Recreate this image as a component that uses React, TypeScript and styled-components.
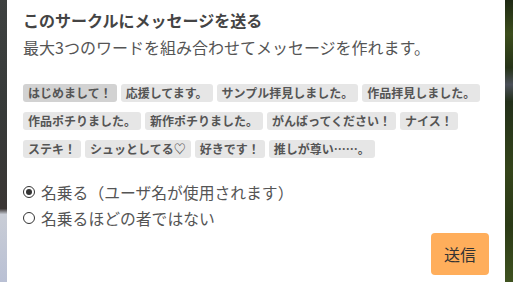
import { useState } from 'react';
import styled, { createGlobalStyle } from 'styled-components';

const GlobalStyle = createGlobalStyle`
  html, body {
    margin: 0;
    padding: 0;
    background: #222;
  }
  * {
    box-sizing: border-box;
  }
`;

const WORDS = [
  'はじめまして！',
  '応援してます。',
  'サンプル拝見しました。',
  '作品拝見しました。',
  '作品ポチりました。',
  '新作ポチりました。',
  'がんばってください！',
  'ナイス！',
  'ステキ！',
  'シュッとしてる♡',
  '好きです！',
  '推しが尊い……。',
];

const Stage = styled.div`
  display: flex;
  width: 513px;
  height: 282px;
  overflow: hidden;
  font-family: 'Noto Sans CJK JP', 'Noto Sans', sans-serif;
`;

const LeftEdge = styled.div`
  width: 7px;
  flex: none;
  background: linear-gradient(
    180deg,
    #3e4140 0%,
    #373a39 40%,
    #3a3634 74%,
    #c9cdd6 76%,
    #b9c0d4 100%
  );
`;

const RightEdge = styled.div`
  width: 8px;
  flex: none;
  background: linear-gradient(
    180deg,
    #1f2a14 0%,
    #3c4d1c 12%,
    #263318 24%,
    #4a4f58 30%,
    #23301a 36%,
    #34441a 60%,
    #2b3a16 80%,
    #3f5220 100%
  );
`;

const Modal = styled.section`
  flex: 1;
  background: #fff;
  padding: 8px 16px 0;
  display: flex;
  flex-direction: column;
`;

const Title = styled.h2`
  margin: 0;
  font-size: 16px;
  line-height: 24px;
  font-weight: 700;
  color: #444;
`;

const Lead = styled.p`
  margin: 3px 0 0;
  font-size: 16px;
  line-height: 24px;
  color: #555;
`;

const ChipList = styled.div`
  display: flex;
  flex-wrap: wrap;
  gap: 10px 4px;
  margin-top: 25px;
`;

const Chip = styled.button<{ $active?: boolean }>`
  border: none;
  margin: 0;
  height: 18px;
  padding: 0 5px;
  border-radius: 3px;
  font-family: inherit;
  font-size: 12px;
  line-height: 18px;
  font-weight: 700;
  color: #555;
  background: ${(p) => (p.$active ? '#d2d2d2' : '#e6e6e6')};
  cursor: pointer;
`;

const Options = styled.div`
  display: flex;
  flex-direction: column;
  margin-top: 21px;
`;

const Option = styled.label`
  display: flex;
  align-items: center;
  gap: 6px;
  height: 26px;
  font-size: 15.8px;
  color: #555;
  cursor: pointer;
`;

const RadioMark = styled.span<{ $checked?: boolean }>`
  width: 12px;
  height: 12px;
  border: 1px solid #333;
  border-radius: 50%;
  display: flex;
  align-items: center;
  justify-content: center;
  flex: none;

  &::after {
    content: '';
    width: 6px;
    height: 6px;
    border-radius: 50%;
    background: ${(p) => (p.$checked ? '#333' : 'transparent')};
  }
`;

const Footer = styled.div`
  display: flex;
  justify-content: flex-end;
  margin-top: 2px;
`;

const SendButton = styled.button`
  width: 58px;
  height: 42px;
  border: none;
  border-radius: 4px;
  background: #ffae5b;
  color: #333;
  font-family: inherit;
  font-size: 16px;
  cursor: pointer;
`;

export default function App() {
  const [picked, setPicked] = useState<number[]>([0]);
  const [named, setNamed] = useState(true);

  const toggle = (i: number) =>
    setPicked((cur) =>
      cur.includes(i) ? cur.filter((x) => x !== i) : cur.length < 3 ? [...cur, i] : cur
    );

  return (
    <>
      <GlobalStyle />
      <Stage>
        <LeftEdge />
        <Modal>
          <Title>このサークルにメッセージを送る</Title>
          <Lead>最大3つのワードを組み合わせてメッセージを作れます。</Lead>
          <ChipList>
            {WORDS.map((w, i) => (
              <Chip key={w} $active={picked.includes(i)} onClick={() => toggle(i)}>
                {w}
              </Chip>
            ))}
          </ChipList>
          <Options>
            <Option onClick={() => setNamed(true)}>
              <RadioMark $checked={named} />
              名乗る（ユーザ名が使用されます）
            </Option>
            <Option onClick={() => setNamed(false)}>
              <RadioMark $checked={!named} />
              名乗るほどの者ではない
            </Option>
          </Options>
          <Footer>
            <SendButton>送信</SendButton>
          </Footer>
        </Modal>
        <RightEdge />
      </Stage>
    </>
  );
}
